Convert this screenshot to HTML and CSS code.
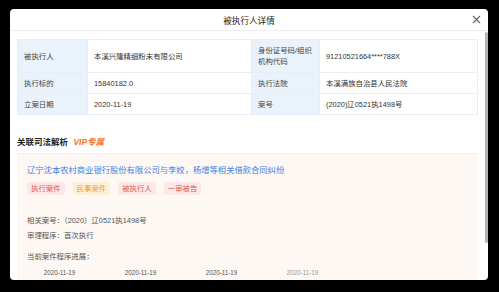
FILE: index.html
```html
<!DOCTYPE html>
<html lang="zh-CN">
<head>
    <meta charset="UTF-8">
    <meta name="viewport" content="width=device-width, initial-scale=1.0">
    <title>被执行人详情</title>
    <link rel="stylesheet" href="styles.css">
</head>
<body>
    <div class="modal">
        <div class="modal-header">
            <span class="modal-title">被执行人详情</span>
            <span class="close">
                <svg width="9" height="9" viewBox="0 0 9 9"><path d="M1 1 L8 8 M8 1 L1 8" stroke="#666" stroke-width="1.1" fill="none"/></svg>
            </span>
        </div>
        <div class="scroll-thumb"></div>

        <div class="modal-body">
            <table class="info-table">
                <tr class="row-tall">
                    <td class="label">被执行人</td>
                    <td class="value">本溪兴隆精细粉末有限公司</td>
                    <td class="label">身份证号码/组织<br>机构代码</td>
                    <td class="value">91210521664****788X</td>
                </tr>
                <tr>
                    <td class="label">执行标的</td>
                    <td class="value">15840182.0</td>
                    <td class="label">执行法院</td>
                    <td class="value">本溪满族自治县人民法院</td>
                </tr>
                <tr>
                    <td class="label">立案日期</td>
                    <td class="value">2020-11-19</td>
                    <td class="label">案号</td>
                    <td class="value">(2020)辽0521执1498号</td>
                </tr>
            </table>

            <!-- 关联司法解析 -->
            <h3 class="section-title">关联司法解析 <span class="vip">VIP专属</span></h3>
            <div class="case-card">
                <a class="case-link">辽宁沈本农村商业银行股份有限公司与李姣，杨增等相关借款合同纠纷</a>
                <div class="tags">
                    <span class="tag tag-red">执行案件</span>
                    <span class="tag tag-orange">民事案件</span>
                    <span class="tag tag-red">被执行人</span>
                    <span class="tag tag-red">一审被告</span>
                </div>
                <p class="case-line first">相关案号：（2020）辽0521执1498号</p>
                <p class="case-line">审理程序：首次执行</p>
                <p class="case-line progress">当前案件程序进展：</p>
                <div class="steps">
                    <span class="step">2020-11-19</span>
                    <span class="step">2020-11-19</span>
                    <span class="step">2020-11-19</span>
                    <span class="step step-light">2020-11-19</span>
                </div>
            </div>
        </div>
    </div>
</body>
</html>
```

FILE: styles.css
```css
body {
    margin: 0;
    background-color: #000;
    font-family: "Liberation Sans", "Noto Sans CJK SC", sans-serif;
    color: #333;
}
.modal {
    position: relative;
    margin: 9px 11px 0 10px;
    height: 271px;
    background: #fff;
    border-radius: 4px;
    overflow: hidden;
}
.modal-header {
    position: relative;
    height: 21px;
    border-bottom: 1px solid #eeeeee;
    display: flex;
    align-items: center;
    justify-content: center;
}
.modal-title {
    font-size: 8.6px;
    color: #222;
}
.close {
    position: absolute;
    right: 7px;
    top: 6px;
    display: flex;
}
.scroll-thumb {
    position: absolute;
    right: 0;
    top: 23px;
    width: 3px;
    height: 211px;
    background: #b5b5b5;
    border-radius: 2px;
}
.modal-body {
    padding: 8px 10px 0 7px;
}
.info-table {
    width: 461px;
    border-collapse: collapse;
    table-layout: fixed;
    font-size: 7.4px;
}
.info-table td {
    border: 1px solid #e8eef6;
    padding: 0 6px;
    height: 20px;
    line-height: 11px;
}
.info-table .row-tall td {
    height: 32px;
}
.info-table td:nth-child(1) { width: 57px; }
.info-table td:nth-child(2) { width: 151px; }
.info-table td:nth-child(3) { width: 55px; }
.label {
    background-color: #eaf2fb;
    color: #444;
}
.value {
    background-color: #fff;
    color: #333;
}
.section-title {
    margin: 21px 0 0 0;
    font-size: 8.5px;
    line-height: 12px;
    font-weight: bold;
    color: #222;
}
.vip {
    margin-left: 3px;
    color: #f5731e;
    font-style: italic;
}
.case-card {
    margin-top: 5px;
    width: 441px;
    height: 200px;
    padding: 10px 10px;
    background: #fdf8f4;
    border-top: 1px solid #f6ede6;
}
.case-link {
    display: block;
    font-size: 8.3px;
    line-height: 12px;
    color: #3f82e4;
}
.tags {
    display: flex;
    gap: 8px;
    margin-top: 6px;
}
.tag {
    font-size: 7.4px;
    line-height: 13px;
    padding: 0 4px;
    border-radius: 2px;
}
.tag-red {
    color: #e2574c;
    background: #fce9e7;
}
.tag-orange {
    color: #f0a22e;
    background: #fdf0d9;
}
.case-line {
    margin: 3px 0 0 0;
    font-size: 7.4px;
    line-height: 12px;
    color: #555;
}
.case-line.first {
    margin-top: 20px;
}
.case-line.progress {
    margin-top: 9px;
}
.steps {
    display: flex;
    margin: 5px 0 0 -8px;
}
.step {
    width: 81px;
    text-align: center;
    font-size: 6.3px;
    line-height: 10px;
    color: #555;
}
.step-light {
    color: #999;
}
```
